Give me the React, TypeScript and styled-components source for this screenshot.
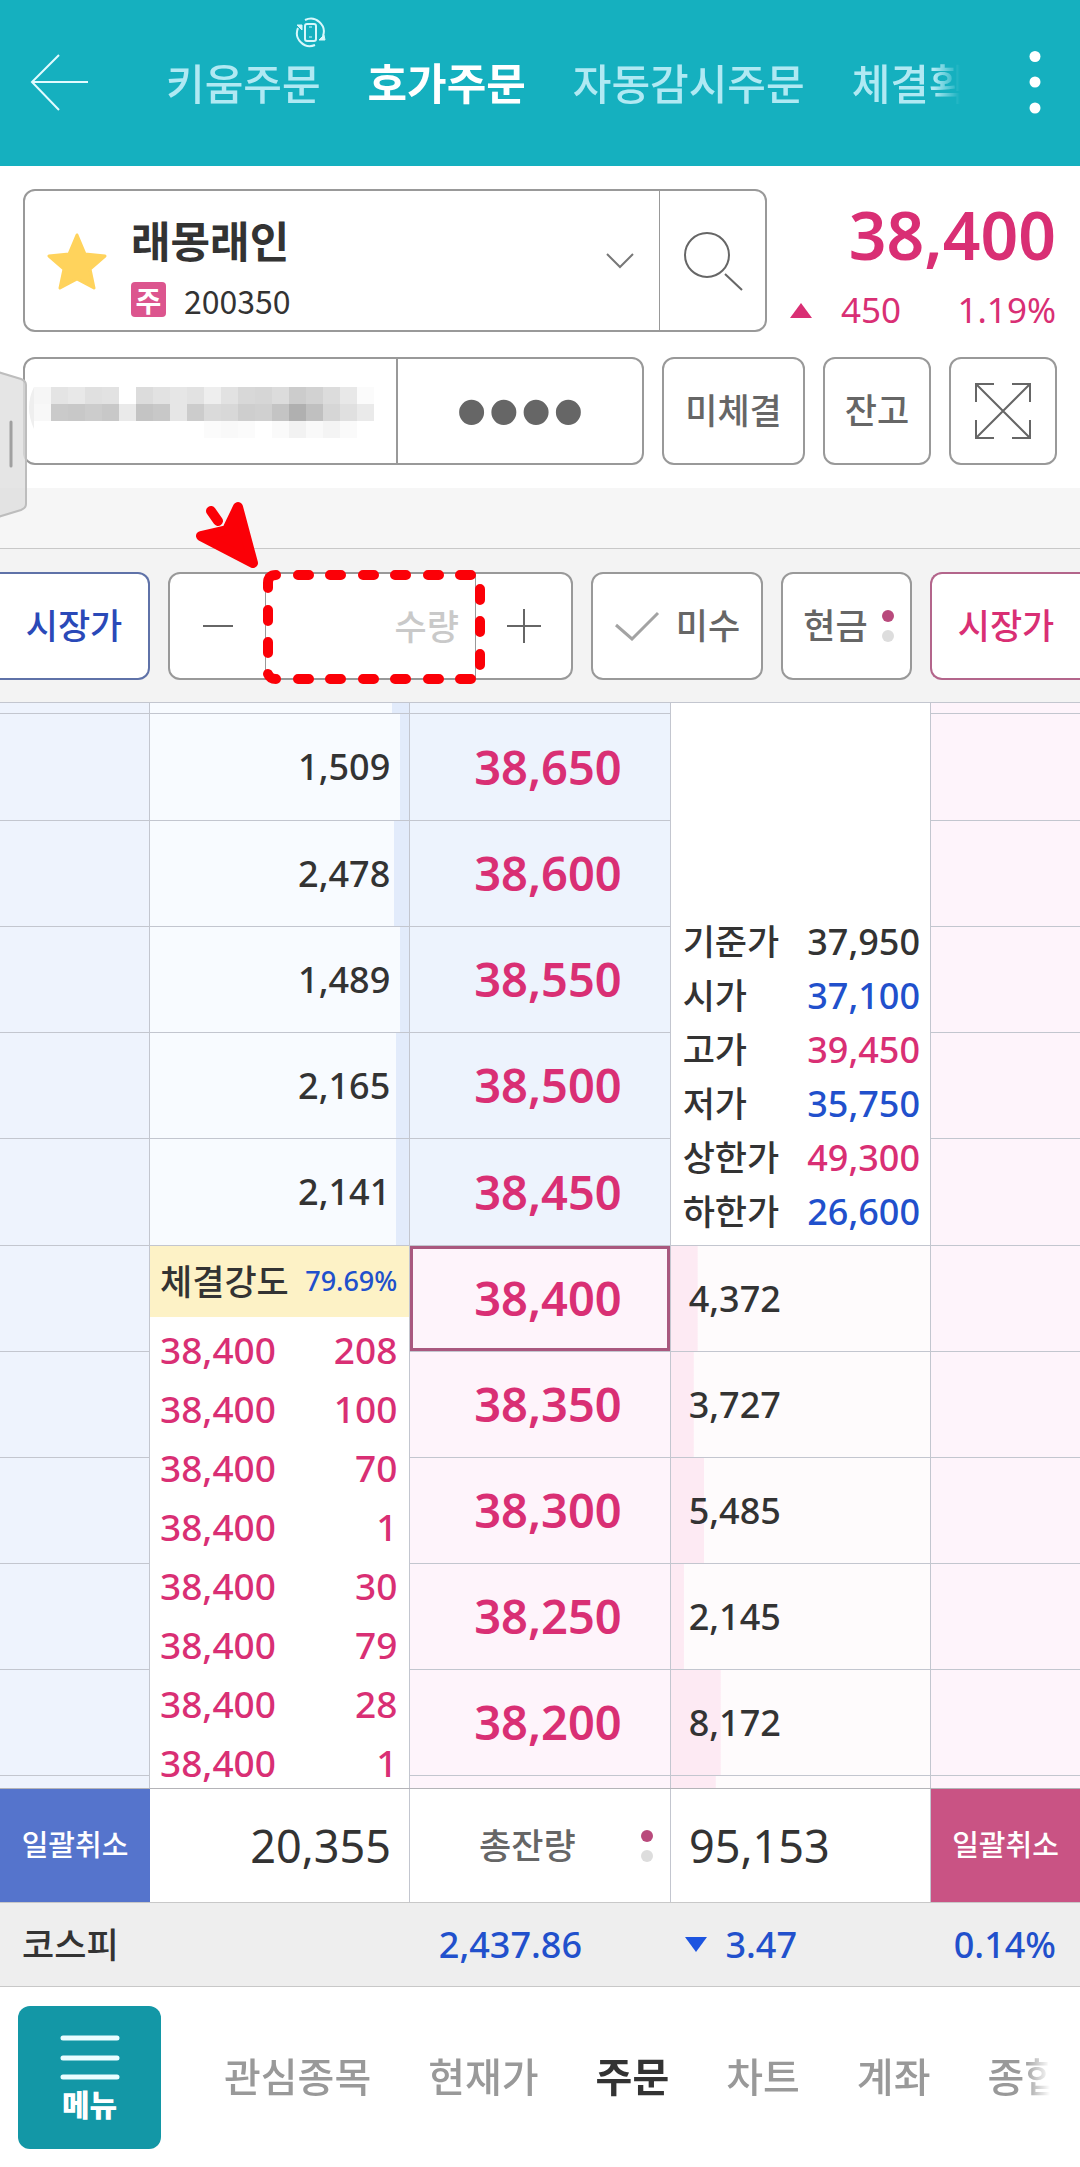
import React, { useState } from "react";
import styled, { createGlobalStyle, css } from "styled-components";

const color = {
  teal: "#15b0bf",
  tealDark: "#1397a6",
  up: "#d92f74",
  down: "#2150cc",
  text: "#333333",
  sub: "#666666",
  line: "#c3c6cf",
  border: "#999999",
  askBg: "#eef3fd",
  bidBg: "#fef4fb",
};

const GlobalStyle = createGlobalStyle`
  *, *::before, *::after { box-sizing: border-box; }
  body { margin: 0; background: #fff; }
  button, input { font: inherit; color: inherit; background: none; border: 0; margin: 0; padding: 0; border-radius: 0; }
  button { cursor: pointer; }
  a { color: inherit; text-decoration: none; }
`;

const Page = styled.div`
  position: relative;
  display: flex;
  flex-direction: column;
  height: 100vh;
  overflow: hidden;
  font-family: "Noto Sans", "Noto Sans CJK KR", sans-serif;
  font-size: 35px;
  line-height: 1.2;
  color: ${color.text};
  white-space: nowrap;
`;

/* ---------- header ---------- */

const Header = styled.header`
  position: relative;
  display: flex;
  align-items: center;
  flex: none;
  height: 166px;
  padding: 0 36px 0 28px;
  background: ${color.teal};
  color: #fff;
`;

const IconButton = styled.button`
  display: flex;
  align-items: center;
  justify-content: center;
  flex: none;
`;

const RotateBadge = styled.svg`
  position: absolute;
  left: 295px;
  top: 17px;
`;

const fade = css`
  mask-image: linear-gradient(to right, #000 calc(100% - 26px), transparent);
`;

const HeaderTabs = styled.nav`
  display: flex;
  flex: 1;
  min-width: 0;
  gap: 47px;
  margin: 0 64px 0 76px;
  padding-top: 2px;
  overflow: hidden;
  line-height: 60px;
  ${fade}
`;

const HeaderTab = styled.a<{ $active?: boolean }>`
  flex: none;
  font-size: ${(p) => (p.$active ? 43 : 42)}px;
  font-weight: ${(p) => (p.$active ? 700 : 500)};
  color: ${(p) => (p.$active ? "#fff" : "#b0e9f3")};
`;

/* ---------- stock summary ---------- */

const Summary = styled.section`
  display: flex;
  flex-direction: column;
  flex: none;
  gap: 25px;
  padding: 23px 23px;
`;

const Row = styled.div`
  display: flex;
  gap: 18px;
`;

const Box = styled.div`
  display: flex;
  flex: 1;
  min-width: 0;
  border: 2px solid ${color.border};
  border-radius: 12px;
  background: #fff;
  overflow: hidden;
`;

const StockPicker = styled.button`
  display: flex;
  align-items: center;
  flex: 1;
  height: 139px;
  padding: 0 24px 0 22px;
  text-align: left;
`;

const StockText = styled.span`
  display: flex;
  flex-direction: column;
  flex: 1;
  gap: 12px;
  margin-left: 24px;
  padding-top: 10px;
`;

const StockName = styled.span`
  font-size: 43px;
  line-height: 56px;
  font-weight: 700;
`;

const StockCode = styled.span`
  display: flex;
  align-items: center;
  gap: 18px;
  font-family: "Noto Sans CJK KR", sans-serif;
  font-size: 32px;
  line-height: 36px;
`;

const Market = styled.span`
  display: flex;
  align-items: center;
  justify-content: center;
  width: 35px;
  height: 35px;
  border-radius: 4px;
  background: #dc558e;
  color: #fff;
  font-size: 28px;
  font-weight: 700;
`;

const SearchButton = styled(IconButton)`
  width: 106px;
  border-left: 1px solid ${color.border};
`;

const Quote = styled.div`
  display: flex;
  flex-direction: column;
  justify-content: space-between;
  width: 272px;
  padding: 11px 1px 0 5px;
  color: ${color.up};
`;

const QuotePrice = styled.strong`
  font-size: 66px;
  line-height: 68px;
  font-weight: 600;
  text-align: right;
`;

const QuoteChange = styled.div`
  display: grid;
  grid-template-columns: 22px 89px 1fr;
  align-items: center;
  font-size: 35px;
  line-height: 44px;
  text-align: right;
`;

const AccountButton = styled.button`
  width: 373px;
  height: 104px;
  border-right: 2px solid ${color.border};
`;

const PasswordInput = styled.input`
  flex: 1;
  min-width: 0;
  height: 104px;
  font-family: "Liberation Sans", sans-serif;
  font-size: 92px;
  text-align: center;
  color: ${color.sub};
  outline: 0;
`;

const Outlined = styled.button<{ $w: number }>`
  display: flex;
  align-items: center;
  justify-content: center;
  flex: none;
  gap: 14px;
  width: ${(p) => p.$w}px;
  height: 108px;
  border: 2px solid ${color.border};
  border-radius: 12px;
  background: #fff;
  color: ${color.sub};
  font-weight: 500;
`;

const PaymentButton = styled(Outlined)`
  padding-left: 4px;
`;

const Spacer = styled.div`
  flex: none;
  height: 60px;
  background: #f6f6f6;
`;

/* ---------- order bar ---------- */

const OrderBar = styled.form`
  display: flex;
  flex: none;
  gap: 18px;
  padding: 23px 0 22px;
  border-top: 1px solid #c8c8c8;
  border-bottom: 1px solid ${color.line};
  background: #f3f3f3;
`;

const MarketOrder = styled.button<{ $side: "sell" | "buy" }>`
  flex: none;
  width: 150px;
  height: 108px;
  border: 2px solid ${(p) => (p.$side === "sell" ? "#5f72a8" : "#b3658b")};
  background: #fff;
  font-weight: 500;
  color: ${(p) => (p.$side === "sell" ? "#2a49b8" : color.up)};
  ${(p) =>
    p.$side === "sell"
      ? "border-left: 0; border-radius: 0 12px 12px 0;"
      : "border-right: 0; border-radius: 12px 0 0 12px;"}
`;

const StepButton = styled(IconButton)`
  width: 95px;
  height: 104px;
`;

const QtyInput = styled.input`
  flex: 1;
  min-width: 0;
  height: 104px;
  padding-right: 16px;
  border: solid ${color.border};
  border-width: 0 1px;
  font-weight: 500;
  text-align: right;
  outline: 0;
  &::placeholder { color: #c9c9c9; opacity: 1; }
`;

const CheckLabel = styled.label`
  display: flex;
  align-items: center;
  justify-content: center;
  flex: none;
  gap: 16px;
  width: 172px;
  height: 108px;
  border: 2px solid ${color.border};
  border-radius: 12px;
  background: #fff;
  color: ${color.sub};
  font-weight: 500;
`;

const HiddenCheck = styled.input`
  position: absolute;
  opacity: 0;
  width: 1px;
  height: 1px;
  &:checked + svg { stroke: ${color.up}; }
`;

const Dots = styled.span`
  display: flex;
  flex-direction: column;
  gap: 8px;
  &::before, &::after {
    content: "";
    width: 12px;
    height: 12px;
    border-radius: 50%;
    background: #b94a7c;
  }
  &::after { background: #dddddd; }
`;

/* ---------- ladder ---------- */

const Ladder = styled.div`
  flex: 1;
  min-height: 0;
  overflow: hidden;
`;

const LadderTable = styled.table`
  width: 100%;
  table-layout: fixed;
  border-collapse: separate;
  border-spacing: 0;
`;

const Cell = styled.td`
  height: 106px;
  padding: 0;
  border-right: 1px solid ${color.line};
  border-bottom: 1px solid ${color.line};
  font-size: 36px;
  font-weight: 500;
`;

const LadderRow = styled.tr<{ $h: number }>`
  & > ${Cell} { height: ${(p) => p.$h}px; }
`;

const SellCell = styled(Cell)`
  background: ${color.askBg};
`;

const BuyCell = styled(Cell)`
  background: ${color.bidBg};
  border-right: 0;
`;

const AskQty = styled(Cell)<{ $pct: number }>`
  padding-right: 19px;
  text-align: right;
  background: linear-gradient(#e2ebfb, #e2ebfb) right / ${(p) => p.$pct}% 100% no-repeat #f8fbff;
`;

const BidQty = styled(Cell)<{ $pct: number }>`
  padding-left: 18px;
  background: linear-gradient(#fdeaf3, #fdeaf3) left / ${(p) => p.$pct}% 100% no-repeat #fefbfc;
`;

const PriceCell = styled(Cell)<{ $side: "ask" | "bid"; $current?: boolean }>`
  padding-left: 16px;
  background: ${(p) => (p.$side === "ask" ? "#edf3fd" : color.bidBg)};
  ${(p) => p.$current && "box-shadow: inset 0 0 0 3px #a9587f;"}
  font-size: 47px;
  font-weight: 600;
  color: ${color.up};
  text-align: center;
`;

const PanelCell = styled(Cell)`
  background: #fff;
  vertical-align: bottom;
`;

const TradeCell = styled(PanelCell)`
  vertical-align: top;
`;

const InfoList = styled.dl`
  display: grid;
  grid-template-columns: auto 1fr;
  margin: 0;
  padding: 0 10px 6px 12px;
  line-height: 54px;
`;

const InfoLabel = styled.dt`
  font-size: 35px;
`;

const InfoValue = styled.dd<{ $c: string }>`
  margin: 0;
  text-align: right;
  color: ${(p) => p.$c};
`;

const Strength = styled.div`
  display: flex;
  align-items: center;
  justify-content: space-between;
  height: 71px;
  padding: 0 12px 0 10px;
  background: #fdf2c6;
  font-size: 35px;
`;

const StrengthValue = styled.span`
  font-size: 27px;
  color: ${color.down};
`;

const TradeList = styled.ul`
  margin: 0;
  padding: 3px 12px 0 10px;
  list-style: none;
  font-size: 37px;
  line-height: 59px;
  color: ${color.up};
`;

const TradeItem = styled.li`
  display: flex;
  justify-content: space-between;
`;

/* ---------- totals and index ---------- */

const Totals = styled.div`
  display: grid;
  grid-template-columns: 150fr 260fr 261fr 260fr 149fr;
  flex: none;
  height: 115px;
  border-top: 1px solid #b4b4b8;
  border-bottom: 1px solid #c8c8c8;
`;

const TotalCell = styled.div<{ $align?: string }>`
  display: flex;
  align-items: center;
  justify-content: ${(p) => p.$align ?? "flex-start"};
  padding: 0 18px;
  border-right: 1px solid ${color.line};
  font-size: 45px;
`;

const TotalToggle = styled.button`
  display: flex;
  align-items: center;
  justify-content: space-between;
  padding: 0 17px 0 69px;
  border-right: 1px solid ${color.line};
  font-weight: 500;
  color: ${color.sub};
`;

const CancelAll = styled.button<{ $side: "sell" | "buy" }>`
  background: ${(p) => (p.$side === "sell" ? "#5574cc" : "#c95384")};
  color: #fff;
  font-size: 29px;
  font-weight: 500;
`;

const IndexBar = styled.div`
  display: grid;
  grid-template-columns: 560px 215px 1fr;
  align-items: center;
  flex: none;
  height: 84px;
  padding: 0 24px 0 22px;
  border-bottom: 1px solid #c8c8c8;
  background: #eeeeee;
  font-size: 36px;
  font-weight: 500;
  color: ${color.down};
`;

const IndexLead = styled.span`
  display: flex;
  align-items: center;
  justify-content: space-between;
`;

const IndexName = styled.span`
  font-size: 35px;
  color: ${color.text};
`;

const IndexItem = styled.span`
  display: flex;
  align-items: center;
  justify-content: flex-end;
  gap: 18px;
`;

/* ---------- bottom navigation ---------- */

const BottomBar = styled.footer`
  display: flex;
  align-items: center;
  flex: none;
  height: 180px;
  padding: 0 30px 0 18px;
  background: #fff;
`;

const MenuButton = styled.button`
  display: flex;
  flex-direction: column;
  align-items: center;
  flex: none;
  gap: 5px;
  width: 143px;
  height: 143px;
  padding-top: 29px;
  border-radius: 12px;
  background: ${color.tealDark};
  color: #fff;
  font-size: 30px;
  line-height: 38px;
  font-weight: 900;
`;

const BottomTabs = styled.nav`
  display: flex;
  flex: 1;
  min-width: 0;
  gap: 57px;
  margin-left: 63px;
  overflow: hidden;
  font-size: 40px;
  line-height: 56px;
  ${fade}
`;

const BottomTab = styled.a<{ $active?: boolean }>`
  flex: none;
  font-weight: ${(p) => (p.$active ? 700 : 500)};
  color: ${(p) => (p.$active ? color.text : "#999")};
`;

/* ---------- overlays ---------- */

const SideHandle = styled.svg`
  position: absolute;
  left: 0;
  top: 370px;
`;

const Callout = styled.svg`
  position: absolute;
  left: 190px;
  top: 495px;
  pointer-events: none;
`;

const MOSAIC = [
  ["f6", "e4", "e8", "e0", "e2", "ff", "dc", "e2", "e6", "e2", "ee", "e2", "d8", "d6", "dc", "cc", "d2", "dc", "e8", "fb"],
  ["f8", "ca", "c8", "cc", "c8", "ea", "c4", "c8", "e6", "cc", "da", "d8", "ce", "d0", "c4", "b0", "c0", "d6", "e0", "ea"],
  ["ff", "ff", "ff", "ff", "ff", "ff", "ff", "ff", "ff", "ff", "fb", "f9", "fb", "ff", "fa", "f2", "f9", "f4", "fa", "ff"],
];

const asks = [
  { price: "38,650", qty: 1509 },
  { price: "38,600", qty: 2478 },
  { price: "38,550", qty: 1489 },
  { price: "38,500", qty: 2165 },
  { price: "38,450", qty: 2141 },
];

const bids = [
  { price: "38,400", qty: 4372 },
  { price: "38,350", qty: 3727 },
  { price: "38,300", qty: 5485 },
  { price: "38,250", qty: 2145 },
  { price: "38,200", qty: 8172 },
];

const info: [string, string, string][] = [
  ["기준가", "37,950", color.text],
  ["시가", "37,100", color.down],
  ["고가", "39,450", color.up],
  ["저가", "35,750", color.down],
  ["상한가", "49,300", color.up],
  ["하한가", "26,600", color.down],
];

const trades = [208, 100, 70, 1, 30, 79, 28, 1];

const barPct = (qty: number) => Math.round((qty / 42500) * 1000) / 10;
const fmt = (n: number) => n.toLocaleString("en-US");

const dashesX = [303, 335, 368, 400, 433, 465];

export default function App() {
  const [qty, setQty] = useState("");
  const [pin, setPin] = useState("0000");

  return (
    <Page>
      <GlobalStyle />
      <Header>
        <IconButton aria-label="뒤로">
          <svg width="62" height="60" viewBox="0 0 62 60" fill="none" stroke="#e2fbff" strokeWidth="2">
            <path d="M60 29H4M31 2L4 29l27 28" />
          </svg>
        </IconButton>
        <RotateBadge width="32" height="31" viewBox="0 0 32 31" fill="none" stroke="#d8f7fb" strokeWidth="2">
          <rect x="10" y="7" width="11" height="17" rx="2" />
          <path d="M14 10h3M14 20h3" strokeWidth="1" />
          <path d="M10 3a13 13 0 0 1 18 16M20 28A13 13 0 0 1 3 11" />
          <path d="M2 8h5v5zM30 23h-6l5-5z" fill="#d8f7fb" strokeWidth="1" />
        </RotateBadge>
        <HeaderTabs>
          <HeaderTab href="#kiwoom">키움주문</HeaderTab>
          <HeaderTab href="#quote" $active>호가주문</HeaderTab>
          <HeaderTab href="#auto">자동감시주문</HeaderTab>
          <HeaderTab href="#filled">체결확인</HeaderTab>
        </HeaderTabs>
        <IconButton aria-label="더보기">
          <svg width="20" height="64" viewBox="0 0 20 64" fill="#fff">
            <circle cx="11" cy="5.5" r="5.5" />
            <circle cx="11" cy="31" r="5.5" />
            <circle cx="11" cy="57" r="5.5" />
          </svg>
        </IconButton>
      </Header>

      <Summary>
        <Row>
          <Box>
            <StockPicker>
              <svg width="60" height="58" viewBox="0 0 60 58" fill="#ffd35c" stroke="#ffd35c" strokeWidth="3" strokeLinejoin="round">
                <path d="M30 3l8 19 20 2-15 13 4 19-17-9-17 9 4-19L2 24l20-2z" />
              </svg>
              <StockText>
                <StockName>래몽래인</StockName>
                <StockCode>
                  <Market>주</Market>
                  200350
                </StockCode>
              </StockText>
              <svg width="30" height="18" viewBox="0 0 30 18" fill="none" stroke="#777" strokeWidth="2">
                <path d="M2 2l13 13L28 2" />
              </svg>
            </StockPicker>
            <SearchButton aria-label="종목 검색">
              <svg width="60" height="60" viewBox="0 0 60 60" fill="none" stroke="#666" strokeWidth="2">
                <circle cx="24" cy="24" r="22" />
                <path d="M42 43l17 16" />
              </svg>
            </SearchButton>
          </Box>
          <Quote>
            <QuotePrice>38,400</QuotePrice>
            <QuoteChange>
              <svg width="22" height="15" viewBox="0 0 22 15" fill={color.up}>
                <path d="M11 0l11 15H0z" />
              </svg>
              <span>450</span>
              <span>1.19%</span>
            </QuoteChange>
          </Quote>
        </Row>
        <Row>
          <Box>
            <AccountButton aria-label="계좌 선택">
              <svg width="371" height="62" viewBox="25 380 371 62">
                <path d="M34 391q-10 20 0 42z" fill="#efefef" />
                {MOSAIC.map((line, r) =>
                  line.map((g, c) => (
                    <rect key={`${r}-${c}`} x={34 + c * 17} y={391 + r * 17} width="17" height="17" fill={`#${g}${g}${g}`} />
                  ))
                )}
              </svg>
            </AccountButton>
            <PasswordInput
              type="password"
              aria-label="계좌 비밀번호"
              maxLength={4}
              value={pin}
              onChange={(e) => setPin(e.target.value)}
            />
          </Box>
          <Outlined $w={143}>미체결</Outlined>
          <Outlined $w={108}>잔고</Outlined>
          <Outlined $w={108} aria-label="전체 화면">
            <svg width="58" height="58" viewBox="0 0 58 58" fill="none" stroke="#666" strokeWidth="2">
              <path d="M2 2l54 54M56 2L2 56M2 20V2h18M38 2h18v18M56 38v18H38M20 56H2V38" />
            </svg>
          </Outlined>
        </Row>
      </Summary>

      <Spacer />

      <OrderBar onSubmit={(e) => e.preventDefault()}>
        <MarketOrder type="button" $side="sell">시장가</MarketOrder>
        <Box>
          <StepButton type="button" aria-label="수량 감소">
            <svg width="30" height="30" viewBox="0 0 30 30" stroke="#666" strokeWidth="2">
              <path d="M0 15h30" />
            </svg>
          </StepButton>
          <QtyInput
            aria-label="수량"
            placeholder="수량"
            value={qty}
            onChange={(e) => setQty(e.target.value)}
          />
          <StepButton type="button" aria-label="수량 증가">
            <svg width="34" height="34" viewBox="0 0 34 34" stroke="#666" strokeWidth="2">
              <path d="M0 17h34M17 0v34" />
            </svg>
          </StepButton>
        </Box>
        <CheckLabel>
          <HiddenCheck type="checkbox" />
          <svg width="46" height="30" viewBox="0 0 46 30" fill="none" stroke="#a3a3a3" strokeWidth="3">
            <path d="M2 14l16 14L44 2" />
          </svg>
          미수
        </CheckLabel>
        <PaymentButton type="button" $w={131}>
          현금
          <Dots />
        </PaymentButton>
        <MarketOrder type="button" $side="buy">시장가</MarketOrder>
      </OrderBar>

      <Ladder>
        <LadderTable>
          <colgroup>
            <col style={{ width: `${(150 / 1080) * 100}%` }} />
            <col />
            <col />
            <col />
            <col style={{ width: `${(149 / 1080) * 100}%` }} />
          </colgroup>
          <tbody>
            <LadderRow $h={11}>
              <SellCell />
              <AskQty $pct={barPct(2860)} />
              <PriceCell $side="ask" />
              <PanelCell rowSpan={6}>
                <InfoList>
                  {info.map(([label, value, c]) => (
                    <React.Fragment key={label}>
                      <InfoLabel>{label}</InfoLabel>
                      <InfoValue $c={c}>{value}</InfoValue>
                    </React.Fragment>
                  ))}
                </InfoList>
              </PanelCell>
              <BuyCell />
            </LadderRow>
            {asks.map((a, i) => (
              <LadderRow key={a.price} $h={i % 4 === 0 ? 107 : 106}>
                <SellCell />
                <AskQty $pct={barPct(a.qty)}>{fmt(a.qty)}</AskQty>
                <PriceCell $side="ask">{a.price}</PriceCell>
                <BuyCell />
              </LadderRow>
            ))}
            {bids.map((b, i) => (
              <LadderRow key={b.price} $h={106}>
                <SellCell />
                {i === 0 && (
                  <TradeCell rowSpan={6}>
                    <Strength>
                      체결강도
                      <StrengthValue>79.69%</StrengthValue>
                    </Strength>
                    <TradeList>
                      {trades.map((t, k) => (
                        <TradeItem key={k}>
                          <span>38,400</span>
                          <span>{t}</span>
                        </TradeItem>
                      ))}
                    </TradeList>
                  </TradeCell>
                )}
                <PriceCell $side="bid" $current={i === 0}>{b.price}</PriceCell>
                <BidQty $pct={barPct(b.qty)}>{fmt(b.qty)}</BidQty>
                <BuyCell />
              </LadderRow>
            ))}
            <LadderRow $h={106}>
              <SellCell />
              <PriceCell $side="bid" />
              <BidQty $pct={barPct(7350)} />
              <BuyCell />
            </LadderRow>
          </tbody>
        </LadderTable>
      </Ladder>

      <Totals>
        <CancelAll $side="sell">일괄취소</CancelAll>
        <TotalCell $align="flex-end">20,355</TotalCell>
        <TotalToggle>
          <span>총잔량</span>
          <Dots />
        </TotalToggle>
        <TotalCell>95,153</TotalCell>
        <CancelAll $side="buy">일괄취소</CancelAll>
      </Totals>

      <IndexBar>
        <IndexLead>
          <IndexName>코스피</IndexName>
          <span>2,437.86</span>
        </IndexLead>
        <IndexItem>
          <svg width="22" height="15" viewBox="0 0 22 15" fill="#1c54e0">
            <path d="M0 0h22L11 15z" />
          </svg>
          3.47
        </IndexItem>
        <IndexItem>0.14%</IndexItem>
      </IndexBar>

      <BottomBar>
        <MenuButton>
          <svg width="60" height="46" viewBox="0 0 60 46" stroke="#e9fdff" strokeWidth="5" strokeLinecap="round">
            <path d="M3 3h54M3 23h54M3 42h54" />
          </svg>
          메뉴
        </MenuButton>
        <BottomTabs>
          <BottomTab href="#watch">관심종목</BottomTab>
          <BottomTab href="#price">현재가</BottomTab>
          <BottomTab href="#order" $active>주문</BottomTab>
          <BottomTab href="#chart">차트</BottomTab>
          <BottomTab href="#account">계좌</BottomTab>
          <BottomTab href="#total">종합</BottomTab>
        </BottomTabs>
      </BottomBar>

      <SideHandle width="28" height="150" viewBox="0 0 28 150">
        <path
          d="M-2 2L21 9q5 2 5 6v119q0 4-5 6L-2 147z"
          fill="rgba(222,222,222,0.8)"
          stroke="#bdbdbd"
          strokeWidth="2"
        />
        <path d="M11 52v44" stroke="#a0a0a0" strokeWidth="3" strokeLinecap="round" />
      </SideHandle>

      <Callout width="310" height="200" viewBox="190 495 310 200" fill="none" stroke="#fb0007" strokeWidth="10" strokeLinecap="round" strokeLinejoin="round">
        <path d="M253 563L238 507l-11 23-26 6z" fill="#fb0007" />
        <path d="M211 511l7 10" />
        {dashesX.map((x) => (
          <path key={x} d={`M${x - 5} 575h11M${x - 5} 679h11`} />
        ))}
        <path d="M268 588v-5q0-8 8-8M268 610v11M268 642v11M268 674q2 5 8 5" />
        <path d="M480 589v11M480 621v11M480 654v11" />
      </Callout>
    </Page>
  );
}
